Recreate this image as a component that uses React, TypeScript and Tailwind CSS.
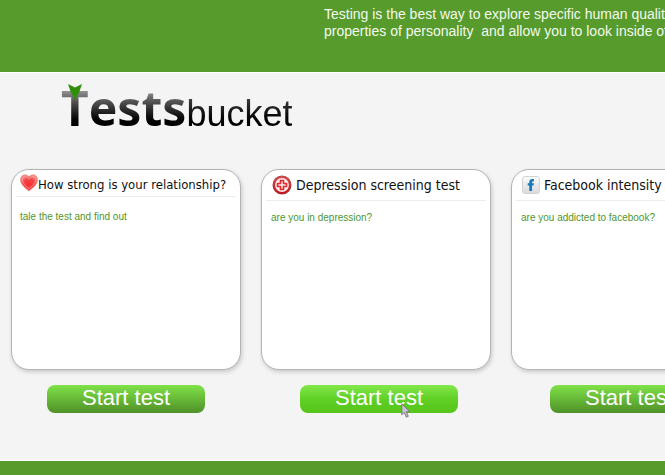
import { useId, type ReactNode } from "react";

type Test = {
  title: string;
  description: string;
  icon: ReactNode;
  compact?: boolean;
  active?: boolean;
};

function HeartIcon() {
  const id = useId();
  return (
    <svg viewBox="0 0 18 18" className="h-[18px] w-[18px] shrink-0" aria-hidden="true">
      <defs>
        <radialGradient id={id} cx="50%" cy="62%" r="60%">
          <stop offset="0" stopColor="#fb2c30" />
          <stop offset="0.6" stopColor="#f0484a" />
          <stop offset="1" stopColor="#f58a88" />
        </radialGradient>
      </defs>
      <path
        d="M9 17C6.500 15 .4 10.600.4 5.800.4 3 2.400.8 4.900.8 6.700.8 8.200 1.600 9 2.900 9.800 1.600 11.300.8 13.100.8c2.500 0 4.500 2.200 4.500 5 0 4.800-6.100 9.200-8.600 11.200Z"
        fill={`url(#${id})`}
        stroke="#ec8a88"
        strokeWidth="0.7"
      />
      <path
        d="M9 14.600C6.800 12.700 2.400 9.300 2.400 5.800c0-1.800 1.100-3 2.600-3C7 2.800 8.200 4 9 5.200c.8-1.200 2-2.400 4-2.400 1.500 0 2.600 1.200 2.600 3 0 3.500-4.400 6.900-6.600 8.800Z"
        fill="none"
        stroke="#fbb5b3"
        strokeWidth="0.6"
      />
    </svg>
  );
}

function CrossIcon() {
  const id = useId();
  return (
    <svg viewBox="0 0 20 20" className="h-5 w-5 shrink-0" aria-hidden="true">
      <defs>
        <linearGradient id={id} x1="0" y1="0" x2="0" y2="1">
          <stop offset="0" stopColor="#d9484b" />
          <stop offset="1" stopColor="#c4161c" />
        </linearGradient>
      </defs>
      <circle cx="10" cy="10" r="8.500" fill="#fbeaea" stroke="#8f4a4c" strokeWidth="2" />
      <circle cx="10" cy="10" r="8" fill="#fbeaea" stroke={`url(#${id})`} strokeWidth="2.200" />
      <path
        d="M8.500 5.500h3v3h3v3h-3v3h-3v-3h-3v-3h3Z"
        fill="#fbe0e0"
        stroke="#df2c31"
        strokeWidth="1.600"
        strokeLinejoin="round"
      />
    </svg>
  );
}

function FacebookIcon() {
  const id = useId();
  return (
    <svg viewBox="0 0 18 18" className="h-[18px] w-[18px] shrink-0" aria-hidden="true">
      <defs>
        <linearGradient id={id} x1="0" y1="0" x2="0" y2="1">
          <stop offset="0" stopColor="#fbfbfb" />
          <stop offset="1" stopColor="#d9dadc" />
        </linearGradient>
      </defs>
      <rect x="0.5" y="0.5" width="17" height="17" rx="2.5" fill={`url(#${id})`} stroke="#d3d4d6" />
      <path
        d="M7.300 15V9.600H5.700V7.200h1.600V6c0-2.100 1.100-3 3-3h1.600v2.400h-1c-.7 0-.9.300-.9.900v.9h1.900l-.3 2.400H10V15Z"
        fill="#1878bd"
      />
    </svg>
  );
}

function PointerIcon() {
  return (
    <svg viewBox="0 0 10 15" className="absolute top-[18px] left-[101px] h-[15px] w-[10px]" aria-hidden="true">
      <path
        d="M.8.8v11l2.500-2.300 2 4.700 2-.9-2-4.500 3.500-.2Z"
        fill="#c9c3cc"
        stroke="#77727c"
        strokeWidth="0.9"
        strokeLinejoin="round"
      />
    </svg>
  );
}

function Logo() {
  return (
    <a href="#" className="relative flex w-max items-baseline whitespace-nowrap">
      <span className="bg-linear-to-b from-[#999] from-22% via-[#5a5a5a] via-38% to-black to-78% bg-clip-text font-['Noto_Sans',sans-serif] text-[48px] leading-[64px] font-bold text-transparent [font-kerning:none]">
        Tests
      </span>
      <span className="bg-linear-to-b from-[#555] to-black to-80% bg-clip-text text-[36px] leading-[44px] text-transparent">
        bucket
      </span>
      <svg viewBox="0 0 14 16" className="absolute top-2 left-[7px] h-4 w-[14px]" aria-hidden="true">
        <path d="M0 0 7 3.5 14 0Q12 8 7 16 2 8 0 0Z" fill="#2f8f0c" />
      </svg>
    </a>
  );
}

function TestCard({ title, description, icon, compact, active }: Test) {
  return (
    <article className="flex w-[230px] shrink-0 flex-col">
      <div className="h-[201px] rounded-[18px] border border-[#b4b4b4] bg-white px-1 shadow-[1px_2px_4px_rgba(0,0,0,0.18)]">
        <div
          className={`flex items-center border-b border-[#ececec] whitespace-nowrap ${
            compact ? "h-[27px] pl-1" : "h-[31px] gap-1 pl-1.5"
          }`}
        >
          {icon}
          <h2
            className={`font-['DejaVu_Sans_Condensed','Noto_Sans',sans-serif] leading-[22px] text-[#111] ${
              compact ? "self-end text-[13px]" : "text-[14px]"
            }`}
          >
            {title}
          </h2>
        </div>
        <p className={`text-[10px] leading-3 text-[#4f962b] ${compact ? "px-1 pt-[14px]" : "px-[5px] pt-[11px]"}`}>
          {description}
        </p>
      </div>
      <button
        type="button"
        className={`relative mt-[15px] h-7 w-[158px] self-center rounded-lg bg-linear-to-b pb-0.5 text-[22px] leading-[26px] text-white ${
          compact ? "" : "ml-1.5"
        } ${active ? "from-[#82e84a] via-[#60d024] to-[#56c41a]" : "from-[#80e248] to-[#4f9128]"}`}
      >
        Start test
        {active && <PointerIcon />}
      </button>
    </article>
  );
}

const TESTS: Test[] = [
  {
    title: "How strong is your relationship?",
    description: "tale the test and find out",
    icon: <HeartIcon />,
    compact: true,
  },
  {
    title: "Depression screening test",
    description: "are you in depression?",
    icon: <CrossIcon />,
    active: true,
  },
  {
    title: "Facebook intensity test",
    description: "are you addicted to facebook?",
    icon: <FacebookIcon />,
  },
];

export default function App() {
  return (
    <div className="flex min-h-screen flex-col overflow-hidden bg-[#f4f4f4] font-['Liberation_Sans',Arial,sans-serif]">
      <header className="h-[73px] border-b border-white bg-[#579b2c] pt-[6px] pl-[324px] text-[14px] leading-[17px] whitespace-nowrap text-[#f3f9ee]">
        <p>
          Testing is the best way to explore specific human qualities,
          <br />
          properties of personality &nbsp;and allow you to look inside of yourself
        </p>
      </header>
      <main className="pb-[47px]">
        <div className="pt-[3px] pl-[61px]">
          <Logo />
        </div>
        <div className="mt-[29px] flex gap-5 pl-[11px]">
          {TESTS.map((test) => (
            <TestCard key={test.title} {...test} />
          ))}
        </div>
      </main>
      <footer className="flex-1 border-t border-white bg-[#579b2c]" />
    </div>
  );
}
